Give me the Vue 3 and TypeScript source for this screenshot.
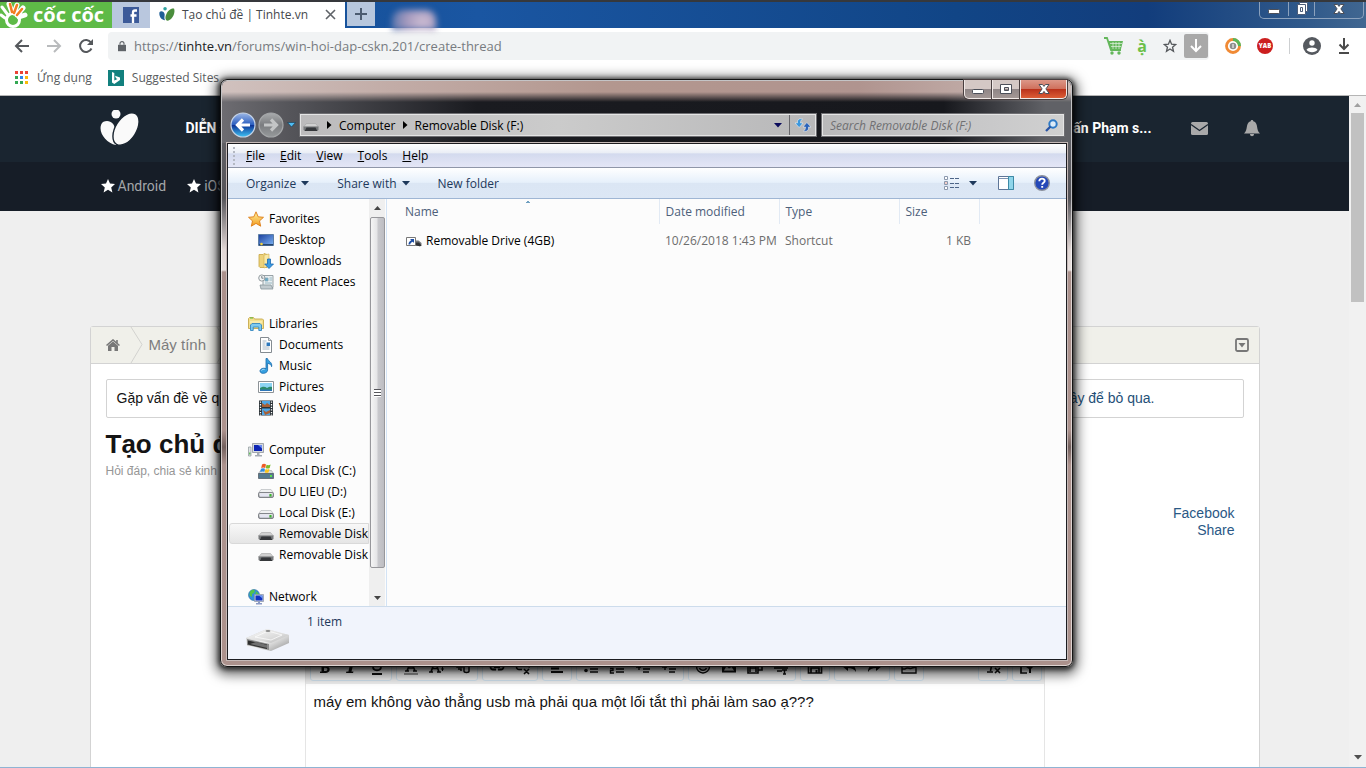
<script setup lang="ts">
import { ref } from 'vue'

interface TreeItem { label: string; icon: string; selected?: boolean }
interface TreeGroup extends TreeItem { children: TreeItem[] }

const groups: TreeGroup[] = [
  {
    label: 'Favorites', icon: 'star', children: [
      { label: 'Desktop', icon: 'desktop' },
      { label: 'Downloads', icon: 'downloads' },
      { label: 'Recent Places', icon: 'recent' },
    ],
  },
  {
    label: 'Libraries', icon: 'libraries', children: [
      { label: 'Documents', icon: 'document' },
      { label: 'Music', icon: 'music' },
      { label: 'Pictures', icon: 'picture' },
      { label: 'Videos', icon: 'video' },
    ],
  },
  {
    label: 'Computer', icon: 'computer', children: [
      { label: 'Local Disk (C:)', icon: 'osdisk' },
      { label: 'DU LIEU (D:)', icon: 'disk' },
      { label: 'Local Disk (E:)', icon: 'disk' },
      { label: 'Removable Disk (F:)', icon: 'usb', selected: true },
      { label: 'Removable Disk (G:)', icon: 'usb' },
    ],
  },
  { label: 'Network', icon: 'network', children: [] },
]

const menus = ['File', 'Edit', 'View', 'Tools', 'Help']

const editorGroups: string[][] = [
  ['bold', 'italic', 'underline'],
  ['color', 'size', 'para'],
  ['link', 'unlink'],
  ['align'],
  ['ul', 'ol', 'outdent', 'indent'],
  ['smile', 'image', 'media', 'insert'],
  ['save'],
  ['undo', 'redo'],
  ['gallery'],
]
const editorTools: string[][] = [['clear'], ['source']]

const url = ref('')
const search = ref('')
const message = ref('máy em không vào thẳng usb mà phải qua một lối tắt thì phải làm sao ạ???')
</script>

<template>
  <svg class="sprite" aria-hidden="true">
    <defs>
      <linearGradient id="g-gold" x1="0" y1="0" x2="0" y2="1"><stop offset="0" stop-color="#fff3a0" /><stop offset="1" stop-color="#f29a1c" /></linearGradient>
      <linearGradient id="g-blue" x1="0" y1="0" x2="1" y2="1"><stop offset="0" stop-color="#1b3f9c" /><stop offset="1" stop-color="#7db4f5" /></linearGradient>
      <linearGradient id="g-grey" x1="0" y1="0" x2="0" y2="1"><stop offset="0" stop-color="#f7f7f7" /><stop offset="1" stop-color="#9c9fa4" /></linearGradient>
      <linearGradient id="g-drive" x1="0" y1="0" x2="1" y2="1"><stop offset="0" stop-color="#b9b9b9" /><stop offset=".5" stop-color="#f4f4f4" /><stop offset="1" stop-color="#8c8c8c" /></linearGradient>
      <linearGradient id="g-lid" x1="0" y1="0" x2="1" y2="1"><stop offset="0" stop-color="#fbfbfb" /><stop offset=".6" stop-color="#dcdcdc" /><stop offset="1" stop-color="#b4b4b4" /></linearGradient>
      <linearGradient id="g-back" x1="0" y1="0" x2="0" y2="1"><stop offset="0" stop-color="#9db8e8" /><stop offset=".48" stop-color="#2c5fc0" /><stop offset=".5" stop-color="#0c2f93" /><stop offset="1" stop-color="#3fc4f5" /></linearGradient>
      <linearGradient id="g-fwd" x1="0" y1="0" x2="0" y2="1"><stop offset="0" stop-color="#a9abad" /><stop offset=".5" stop-color="#7b7d80" /><stop offset="1" stop-color="#96999b" /></linearGradient>
    </defs>
    <symbol id="i-star" viewBox="0 0 16 16"><path d="M8 .8l2.200 5 5.300.5-4 3.600 1.200 5.300L8 12.400l-4.700 2.800 1.200-5.300-4-3.600 5.300-.5z" fill="url(#g-gold)" stroke="#dd7d17" stroke-width=".9" /></symbol>
    <symbol id="i-desktop" viewBox="0 0 16 16"><path d="M.5 2.500h15v11H.5z" fill="url(#g-blue)" stroke="#5d7ea5" /><path d="M1 12h14v1.500H1z" fill="#27476f" /><circle cx="3.500" cy="12" r="1.300" fill="#f3d13d" /></symbol>
    <symbol id="i-downloads" viewBox="0 0 16 16"><path d="M1 1.500h4l1-1 3 1v13H2l-1-1z" fill="#edd27a" stroke="#c7a441" stroke-width=".8" /><path d="M6 2l5-1v12l-5 2z" fill="#fae9a5" stroke="#cfae52" stroke-width=".6" /><path d="M9.500 6h3v5h3L11 15.500 6.700 11h2.800z" fill="#3b9be3" stroke="#1b68b0" stroke-width=".8" /></symbol>
    <symbol id="i-recent" viewBox="0 0 16 16"><path d="M5 1.500h10v12H5z" fill="#e8eef1" stroke="#8d989d" stroke-width=".9" /><path d="M7 4h3v3H7zM11.500 4h2.500M11.500 6h2.500M7 9h7" fill="#64a9c8" stroke="#86a9b7" stroke-width=".8" /><path d="M2 11h11l2 4H3z" fill="#c2cbcf" stroke="#87949a" stroke-width=".8" /><circle cx="3.800" cy="4" r="3.100" fill="#f4f6f7" stroke="#929b9f" /><path d="M3.800 2v2.200H5.500" fill="none" stroke="#58646a" stroke-width=".8" /></symbol>
    <symbol id="i-libraries" viewBox="0 0 16 16"><path d="M.5 12.500v-10l1-1h4l1 1.500h8l1 1v8.500z" fill="#f3df8d" stroke="#c6a94c" stroke-width=".9" /><path d="M2 2h3" stroke="#5fbb46" /><path d="M2 6h12" stroke="#fff6c9" /><path d="M2.500 14.500V9l1.500-1.500h8L13.500 9v5.500h-2.700V11H5.200v3.500z" fill="#7ecaf0" stroke="#3788bf" stroke-width=".9" /></symbol>
    <symbol id="i-document" viewBox="0 0 16 16"><path d="M2.500.5h8l3 3v12h-11z" fill="#fff" stroke="#848b91" /><path d="M10.500.5v3h3" fill="#dce2e6" stroke="#848b91" stroke-width=".8" /><path d="M4.500 4h4M4.500 6h3M4.500 8h3M4.500 10h7M4.500 12h7" stroke="#8fa3b5" stroke-width=".8" /><path d="M8.500 5.500h3.500v3.500H8.500z" fill="#2d78bd" /></symbol>
    <symbol id="i-music" viewBox="0 0 16 16"><path d="M8 .5h1.400c.5 2.700 5.300 3.500 4.200 8.200-.4-2.300-2.100-3-4-3.400V12c0 4-7.600 4.500-7.600 1 0-2.300 3.500-3.500 6-2.300z" fill="#36a0e0" stroke="#1869ab" stroke-width=".8" /><path d="M3.500 12.500c.5-1 2-1.300 3-1" stroke="#b6e3fb" fill="none" /></symbol>
    <symbol id="i-picture" viewBox="0 0 16 16"><path d="M.5 2.500h15v11H.5z" fill="#fff" stroke="#8c9297" /><path d="M2 4h12v8H2z" fill="#8dd4f4" /><path d="M2 9c3-2 5-1.500 7 0 2-1 3-1.500 5-1v4H2z" fill="#2b8a6c" /><path d="M2 10.500h12V12H2z" fill="#2e76b8" /></symbol>
    <symbol id="i-video" viewBox="0 0 16 16"><path d="M1 .5h14v15H1z" fill="#2c3338" /><path d="M4 1h8v6H4zM4 8.500h8V15H4z" fill="#4ea6e6" /><path d="M4 3l3 2 2-2 3 2v2H4zM5 10l3 2 4-2v3l-5 2z" fill="#a75f35" /><path d="M2.500 1.500v14M13.500 1.500v14" stroke="#fff" stroke-width="1.300" stroke-dasharray="1.300 1.300" /></symbol>
    <symbol id="i-computer" viewBox="0 0 16 16"><path d="M.5 5h2.500v9H.5z" fill="#dfe5e6" stroke="#8d9799" stroke-width=".7" /><path d="M1.200 10.500h1.200v2H1.200z" fill="#48b53c" /><path d="M4.500 1.500h11v9h-11z" fill="#d5d9de" stroke="#8e949c" stroke-width=".8" /><path d="M6 3h8v6H6z" fill="#0d24b3" /><path d="M10 3h4v3.500z" fill="#6a8bf1" /><path d="M9 11h2.500v2H14v1.500H7V13h2z" fill="#a6acb3" /></symbol>
    <symbol id="i-osdisk" viewBox="0 0 16 16"><path d="M2.500 7.500h11l2 3H.5z" fill="#d8dde0" stroke="#9aa1a6" stroke-width=".6" /><path d="M.5 10.500h15v5H.5z" fill="#53798f" stroke="#556069" stroke-width=".8" /><path d="M12 12h2v2h-2z" fill="#5ee14c" /><path d="M4 1.500C5.500.5 7 .8 8 1.500L7.200 5C6 4.300 4.500 4.300 3.200 5z" fill="#ef5a25" /><path d="M8.600 1.700c1.300.7 2.700.5 4-.2L11.700 5c-1.300.7-2.700.7-4 0z" fill="#7dbb2b" /><path d="M3 5.700c1.300-.7 2.800-.7 4 0L6.200 9c-1.200-.7-2.600-.6-4 0z" fill="#2f8be0" /><path d="M7.600 5.900c1.300.7 2.700.6 3.900-.1l-.9 3.400c-1.200.7-2.600.7-3.900 0z" fill="#fbc31a" /></symbol>
    <symbol id="i-disk" viewBox="0 0 16 16"><path d="M3 5.500h10l2.500 3.500H.5z" fill="#f0f1f2" stroke="#b7babd" stroke-width=".7" /><rect x=".5" y="8.500" width="15" height="5" rx="1.500" fill="url(#g-grey)" stroke="#777b80" stroke-width=".9" /><path d="M2 9.500h9v3H2z" fill="#e4e5f2" /><path d="M11.500 10h2v2.500h-2z" fill="#39b92c" /></symbol>
    <symbol id="i-usb" viewBox="0 0 16 16"><path d="M3.500 6.500h9l3 3.500H.5z" fill="#d0d0d0" stroke="#a3a3a3" stroke-width=".6" /><path d="M.5 9.500h15v3.500l-1 .8-2-2.500h-9l-2 2.500-1-.8z" fill="#77797b" /><path d="M3.500 10.500h9l2 3.500H1.500z" fill="#35373a" /></symbol>
    <symbol id="i-network" viewBox="0 0 16 16"><circle cx="6" cy="6" r="5.500" fill="#2f8fdb" stroke="#2f6e9e" stroke-width=".6" /><path d="M2 2.500C4 .5 6 .5 7 1.500L6 4 4 5v3L1.500 6.500zM8 2l3 3-1 2H7z" fill="#54c34a" /><path d="M6.500 5.500h9v7h-9z" fill="#cfd6e2" stroke="#8791a5" stroke-width=".7" /><path d="M7.500 6.500h7v5h-7z" fill="#1233c0" /><path d="M11 6.500h3.500v3z" fill="#6f9bf3" /><path d="M10 12.500h2V14h2v1.500H8V14h2z" fill="#8b9ac4" /></symbol>
    <symbol id="i-shortcut" viewBox="0 0 16 16"><path d="M9 7.500h3.500L15.500 10v2.500l-1.500.7-5-.7z" fill="#77797b" /><path d="M9 9.500h4l2.500 3-1.500.7-5-1z" fill="#303235" /><path d="M.5 4.500h9v8h-9z" fill="#fff" stroke="#777" /><path d="M4 6h4v4L6.800 8.800C5.200 9.500 4.500 10 4.200 11.500H2.500c0-2 1-3.300 2.800-4.200z" fill="#1c4ea5" /></symbol>
    <symbol id="i-down" viewBox="0 0 8 5"><path d="M0 0h8L4 4.500z" fill="currentColor" /></symbol>
    <symbol id="i-right" viewBox="0 0 5 8"><path d="M0 0l4.500 4L0 8z" fill="currentColor" /></symbol>
    <symbol id="i-star5" viewBox="0 0 14 14"><path d="M7 0l2 4.600 5 .5-3.800 3.300 1.200 5L7 10.700 2.600 13.400l1.200-5L0 5.100l5-.5z" fill="currentColor" /></symbol>
    <symbol id="i-min" viewBox="0 0 16 16"><rect x="2.500" y="8.500" width="11" height="4" rx="1" fill="#fff" stroke="#4c4f59" /></symbol>
    <symbol id="i-max" viewBox="0 0 16 16"><path d="M2.500 3.500h11v9h-11zM6.500 6.500h4v3h-4z" fill="#fff" fill-rule="evenodd" stroke="#4c4f59" /></symbol>
    <symbol id="i-restore" viewBox="0 0 16 16"><path d="M5.500 1.500h8v9h-8z" fill="#fff" stroke="#4c5c78" /><path d="M3.500 3.500h8v10h-8zM6.500 6.500h2v4h-2z" fill="#fff" fill-rule="evenodd" stroke="#4c5c78" /></symbol>
    <symbol id="i-close" viewBox="0 0 16 16"><path d="M3 3.500h3.500L8 5.400l1.500-1.900H13L9.900 7.900l3.300 4.600H9.500L8 10.400l-1.500 2.100H2.800l3.300-4.600z" fill="#fff" stroke="#4c4f59" /></symbol>
    <symbol id="e-bold" viewBox="0 0 16 16"><path d="M3 2h5.500c4.500 0 4.500 5 1.500 5.500 4 .7 3.500 6.500-1.500 6.500H3v-1.500h1.500v-9H3zm4 2v2.700h1.500c2 0 2-2.700 0-2.700zm0 4.700V12h1.500c2.500 0 2.500-3.300 0-3.300z" fill="currentColor" /></symbol>
    <symbol id="e-italic" viewBox="0 0 16 16"><path d="M6 2h7l-.3 1.500h-2L8.500 12.500h2L10 14H3l.4-1.500h2L7.500 3.500h-2z" fill="currentColor" /></symbol>
    <symbol id="e-underline" viewBox="0 0 16 16"><path d="M4 1v6.500c0 5 8 5 8 0V1M3 15h10" fill="none" stroke="currentColor" stroke-width="1.800" /></symbol>
    <symbol id="e-color" viewBox="0 0 16 16"><path d="M4 12L8 2l4 10M5 9h6M2 12h4M10 12h4" fill="none" stroke="currentColor" stroke-width="1.700" /><path d="M1 15h14" stroke="#777" stroke-width="1.500" /></symbol>
    <symbol id="e-size" viewBox="0 0 16 16"><path d="M2 13L6 2l4 11M3.500 9.500h5M0 13h4M8 13h4" fill="none" stroke="currentColor" stroke-width="1.700" /><path d="M12 10h3M13.500 8v4" stroke="currentColor" /></symbol>
    <symbol id="e-para" viewBox="0 0 16 16"><path d="M2 5h5v3H2zM3 10h3v2M9 7v5c0 2 5 2 5 0V5" fill="none" stroke="currentColor" stroke-width="1.500" /></symbol>
    <symbol id="e-link" viewBox="0 0 16 16"><path d="M7 5.500H4a2.500 2.500 0 000 5h3M9 5.500h3a2.500 2.500 0 010 5H9M5 8h6" fill="none" stroke="currentColor" stroke-width="1.800" /></symbol>
    <symbol id="e-unlink" viewBox="0 0 16 16"><path d="M6 5.500H4a2.500 2.500 0 000 5h3M9 5.500h3a2.500 2.500 0 012 3M9 10l5 5m0-5l-5 5" fill="none" stroke="currentColor" stroke-width="1.600" /></symbol>
    <symbol id="e-align" viewBox="0 0 16 16"><path d="M2 3h12M2 6h7M2 9.500h8M2 13h12" stroke="currentColor" stroke-width="1.800" /></symbol>
    <symbol id="e-ul" viewBox="0 0 16 16"><path d="M7 4h8M7 10h8M7 13h8" stroke="currentColor" stroke-width="1.500" /><circle cx="3" cy="4" r="1.700" fill="currentColor" /><circle cx="3" cy="11.500" r="1.800" fill="currentColor" /></symbol>
    <symbol id="e-ol" viewBox="0 0 16 16"><path d="M7 4h8M7 10h8M7 13h8M1 9.500h3v2H1.500v2.500H5M3 2v4" fill="none" stroke="currentColor" stroke-width="1.400" /></symbol>
    <symbol id="e-outdent" viewBox="0 0 16 16"><path d="M1 3h14M8 6.500h7M8 10h7M8 13h6M6 8H1m3-3v6" fill="none" stroke="currentColor" stroke-width="1.400" /></symbol>
    <symbol id="e-smile" viewBox="0 0 16 16"><circle cx="8" cy="7.500" r="6.500" fill="none" stroke="currentColor" stroke-width="1.400" /><path d="M4.500 9c1 3 6 3 7 0M5.500 5v1.500M10.500 5v1.500" fill="none" stroke="currentColor" stroke-width="1.300" /></symbol>
    <symbol id="e-image" viewBox="0 0 16 16"><path d="M1 2.500h14v11H1zM3 11.500h10L10.500 8 8 9.500 5.500 7z" fill="currentColor" fill-rule="evenodd" /></symbol>
    <symbol id="e-media" viewBox="0 0 16 16"><path d="M1 4h10v10H1zM3 5v8M9 5v8M3 9h6M7 1.500h8V11h-4" fill="none" stroke="currentColor" stroke-width="1.600" /></symbol>
    <symbol id="e-insert" viewBox="0 0 16 16"><path d="M1 3h14M1 6h14M1 9h14M4 12h5M9 11h5M11.500 11v4M10 15h3" fill="none" stroke="currentColor" stroke-width="1.500" /></symbol>
    <symbol id="e-save" viewBox="0 0 16 16"><path d="M1.500 2h11l2 2v10h-13zM4 14V9h8v5M5 2v3h5V2" fill="none" stroke="currentColor" stroke-width="1.700" /><path d="M8.500 11h2v3h-2z" fill="currentColor" /></symbol>
    <symbol id="e-undo" viewBox="0 0 16 16"><path d="M1 7l6-5v3c5 0 8 3 8 8-2-3-4-4-8-4v3z" fill="currentColor" /></symbol>
    <symbol id="e-redo" viewBox="0 0 16 16"><path d="M15 7L9 2v3c-5 0-8 3-8 8 2-3 4-4 8-4v3z" fill="currentColor" /></symbol>
    <symbol id="e-gallery" viewBox="0 0 16 16"><path d="M1 2h14v12H1zM1 10h3c3-3 5 1 7-1l4-1" fill="none" stroke="currentColor" stroke-width="1.400" /></symbol>
    <symbol id="e-clear" viewBox="0 0 16 16"><path d="M3 2h9M7.500 2l-2 10M2 13h6M10 9l5 5m0-5l-5 5" fill="none" stroke="currentColor" stroke-width="1.600" /></symbol>
    <symbol id="e-source" viewBox="0 0 16 16"><path d="M6 3H2v11h6" fill="none" stroke="currentColor" stroke-width="1.700" /><path d="M7 3h7v5l-2 2v4h-2v-4L7 8z" fill="currentColor" /></symbol>
  </svg>

  <div class="screen">
    <header class="tabstrip">
      <div class="brand">
        <svg class="brand-mark" width="30" height="26" viewBox="0 0 30 26"><g fill="none" stroke="#fff" stroke-width="3"><circle cx="13" cy="18" r="6.500" /><path d="M2 5l6 8M1 13l4 3" stroke-linecap="round" /></g><path d="M9 2l3 8M17 3l-3 8M23 6l-6 7M25 13l-6 2" stroke="#fff" stroke-width="5" stroke-linecap="round" /><path d="M10 2l2 8M17 3l-3 8M22 7l-5 6" stroke="#f47b20" stroke-width="2.500" stroke-linecap="round" /></svg>
        <span>cốc cốc</span>
      </div>
      <button class="tab-pinned" aria-label="Facebook"><svg width="16" height="16" viewBox="0 0 16 16"><path d="M0 0h16v16H0z" fill="#3c5a99" /><path d="M14 3.500h-2c-1.500 0-2 .8-2 2V16M7.500 8.500h6" stroke="#fff" stroke-width="2.300" fill="none" /></svg></button>
      <div class="tab-active">
        <svg width="16" height="14" viewBox="0 0 40 36"><circle cx="15" cy="4.500" r="4.500" fill="#2fa3a0" /><path d="M1 13c4-4 12-1 13 6 0 6-2 10 1 15C5 34-2 22 1 13z" fill="#1f5f96" /><path d="M38 4c4 9-2 26-14 31-10 2-9-10-6-16C22 9 31 2 38 4z" fill="#4a8d3c" /></svg>
        <span>Tạo chủ đề | Tinhte.vn</span>
        <button class="tab-close" aria-label="Close tab"><svg width="11" height="11" viewBox="0 0 11 11"><path d="M1 1l9 9M10 1l-9 9" stroke="#5f6368" stroke-width="1.600" /></svg></button>
      </div>
      <button class="tab-new" aria-label="New tab"><svg width="12" height="12" viewBox="0 0 12 12"><path d="M6 0v12M0 6h12" stroke="#4b5b70" stroke-width="2" /></svg></button>
      <span class="desktop-blur"></span>
      <div class="browser-caption">
        <button aria-label="Minimize browser"><svg width="16" height="16"><use href="#i-min" /></svg></button>
        <button class="mid" aria-label="Restore browser"><svg width="16" height="16"><use href="#i-restore" /></svg></button>
        <button class="wide" aria-label="Close browser"><svg width="16" height="16"><use href="#i-close" /></svg></button>
      </div>
    </header>

    <div class="navbar">
      <button aria-label="Back"><svg width="16" height="16" viewBox="0 0 16 16"><path d="M15 8H2M8 2L2 8l6 6" fill="none" stroke="#55585c" stroke-width="2" /></svg></button>
      <button aria-label="Forward"><svg width="16" height="16" viewBox="0 0 16 16"><path d="M1 8h13M8 2l6 6-6 6" fill="none" stroke="#b9bbbd" stroke-width="2" /></svg></button>
      <button aria-label="Reload"><svg width="16" height="16" viewBox="0 0 16 16"><path d="M13.500 10.500A6 6 0 1113 4.500" fill="none" stroke="#55585c" stroke-width="2" /><path d="M15 1v6H9z" fill="#55585c" /></svg></button>
      <div class="omnibox">
        <svg width="8" height="12" viewBox="0 0 10 13"><path d="M0 5h10v8H0z" fill="#5f6368" /><path d="M2.500 5V3.500a2.500 2.500 0 015 0V5" fill="none" stroke="#5f6368" stroke-width="1.400" /></svg>
        <label class="url"><span class="dim">https://</span>tinhte.vn<span class="dim">/forums/win-hoi-dap-cskn.201/create-thread</span><input v-model="url" aria-label="Address" /></label>
        <button aria-label="Shopping"><svg width="20" height="18" viewBox="0 0 20 18"><path d="M0 1h3l4 12h10" fill="none" stroke="#64b75b" stroke-width="1.800" /><path d="M4 4h15l-2 8H7z" fill="#64b75b" /><path d="M6 6.500h12M7 9.500h10M9 5v7M12 5v7M15 5v7" stroke="#e4f2e3" stroke-width=".7" /><circle cx="8" cy="16" r="1.700" fill="#64b75b" /><circle cx="15" cy="16" r="1.700" fill="#64b75b" /></svg></button>
        <button class="accent" aria-label="Vietnamese input">ạ̀</button>
        <button aria-label="Bookmark"><svg width="14" height="14" viewBox="-1 -1 16 16"><path d="M7 .5l1.800 4.400 4.700.4-3.600 3.100 1.100 4.600-4-2.500L3 13l1.100-4.600L.5 5.300l4.700-.4z" fill="none" stroke="#55585c" stroke-width="1.500" /></svg></button>
        <button class="save-page" aria-label="Download page"><svg width="12" height="14" viewBox="0 0 12 14"><path d="M6 0v12M1 7l5 5 5-5" fill="none" stroke="#fff" stroke-width="2" /></svg></button>
      </div>
      <div class="extensions">
        <button aria-label="Coc Coc rewards"><svg width="16" height="16" viewBox="0 0 16 16"><circle cx="8" cy="8" r="6.500" fill="#fff" stroke="#f08a35" stroke-width="2.800" /><path d="M8 1.500A6.500 6.500 0 0114.500 8" fill="none" stroke="#58b65a" stroke-width="3" /><circle cx="8" cy="8" r="3.300" fill="#8e8e8e" /><path d="M8 6v4" stroke="#fff" stroke-width="1" /></svg></button>
        <button class="yab" aria-label="YAB">YAB</button>
        <i class="divider"></i>
        <button aria-label="Profile"><svg width="18" height="18" viewBox="0 0 18 18"><circle cx="9" cy="9" r="9" fill="#55595f" /><circle cx="9" cy="6" r="2.700" fill="#fff" /><path d="M3.500 12.800c2-3.200 9-3.200 11 0-2 3.200-9 3.200-11 0z" fill="#fff" /></svg></button>
        <button aria-label="Downloads"><svg width="12" height="16" viewBox="0 0 12 16"><path d="M6 0v11M1.500 6.500L6 11l4.500-4.500M1 15h10" fill="none" stroke="#4a4a4a" stroke-width="2" /></svg></button>
      </div>
    </div>

    <nav class="bookmarks">
      <a href="#apps"><svg width="14" height="14" viewBox="0 0 14 14"><path d="M0 0h3v3H0zM5 0h3v3H5zM10 0h3v3h-3z" fill="#ea4335" /><path d="M0 5h3v3H0z" fill="#34a853" /><path d="M5 5h3v3H5z" fill="#2f86eb" /><path d="M10 5h3v3h-3z" fill="#f9b90a" /><path d="M0 10h3v3H0z" fill="#34a853" /><path d="M5 10h3v3H5z" fill="#34a853" /><path d="M10 10h3v3h-3z" fill="#f9b90a" /></svg>Ứng dụng</a>
      <a href="#suggested"><svg width="16" height="16" viewBox="0 0 16 16"><path d="M0 0h16v16H0z" fill="#12807e" /><path d="M4 2l2.300 1v7.500L9.500 9 8 8.200 7 5.700l5 1.900V10l-5.700 4L4 12.500z" fill="#fff" /></svg>Suggested Sites</a>
    </nav>

    <div class="viewport">
      <main class="page">
        <div class="site-top">
          <div class="wrap">
            <a class="site-logo" href="#home" aria-label="Tinhte"><svg width="40" height="36" viewBox="0 0 40 36"><circle cx="16" cy="4" r="4.500" fill="#fafafa" /><path d="M3 12c6-3 12 1 12 8l1 15C5 33-4 19 3 12z" fill="#fafafa" /><ellipse cx="26" cy="19" rx="10.500" ry="18" transform="rotate(32 26 19)" fill="#fafafa" stroke="#1a2530" stroke-width="1.400" /></svg></a>
            <a class="site-link" href="#forum">DIỄN ĐÀN</a>
            <a class="user" href="#user">Tuấn Phạm s...</a>
            <button aria-label="Inbox"><svg width="17" height="13" viewBox="0 0 17 13"><rect width="17" height="13" rx="1.500" fill="#a9a9a9" /><path d="M0 2.500l8.500 6 8.500-6" fill="none" stroke="#1a2530" stroke-width="1.300" /></svg></button>
            <button aria-label="Alerts"><svg width="16" height="17" viewBox="0 0 16 17"><path d="M8 0c1 0 1.300.7 1.300 1.300C15 3 11.500 10 16 13.500H0C4.500 10 1 3 6.700 1.300 6.700.7 7 0 8 0zM6 14h4c0 3-4 3-4 0z" fill="#a9a9a9" /></svg></button>
          </div>
        </div>
        <div class="site-nav">
          <div class="wrap">
            <a href="#android"><svg width="14" height="14"><use href="#i-star5" /></svg>Android</a>
            <a href="#ios"><svg width="14" height="14"><use href="#i-star5" /></svg>iOS</a>
          </div>
        </div>
        <section class="panel">
          <div class="crumbs">
            <a href="#home" aria-label="Home"><svg width="14" height="12" viewBox="0 0 14 12"><path d="M7 2.500l5 4.200V12H8.500V8h-3v4H2V6.700z" fill="#777" /><path d="M.5 6.500L7 1l6.500 5.500M11 1v3" fill="none" stroke="#777" stroke-width="1.600" /></svg></a>
            <svg class="chev" width="13" height="36" viewBox="0 0 13 36"><path d="M1 0l11 17.500L1 36" fill="none" stroke="#d2d2cf" /></svg>
            <a href="#pc">Máy tính</a>
            <svg class="chev" width="13" height="36" viewBox="0 0 13 36"><path d="M1 0l11 17.500L1 36" fill="none" stroke="#d2d2cf" /></svg>
            <button class="crumb-menu" aria-label="Quick navigation"><svg width="14" height="14" viewBox="0 0 14 14"><rect x="1" y="1" width="12" height="12" rx="1.500" fill="none" stroke="#777" stroke-width="1.800" /><path d="M3.500 5h7L7 9.500z" fill="#777" /></svg></button>
          </div>
          <div class="notice"><span>Gặp vấn đề về quyền</span><a href="#skip">đây để bỏ qua.</a></div>
          <h1>Tạo chủ đề</h1>
          <p class="sub">Hỏi đáp, chia sẻ kinh nghiệm</p>
          <div class="share"><a href="#facebook">Facebook</a><a href="#share">Share</a></div>
          <div class="editor">
            <div class="editor-bar">
              <div v-for="(g, i) in editorGroups" :key="i" class="tool-group">
                <button v-for="t in g" :key="t" :aria-label="t"><svg width="16" height="16"><use :href="'#e-' + (t === 'indent' ? 'outdent' : t)" /></svg></button>
              </div>
              <i class="spring"></i>
              <div v-for="(g, i) in editorTools" :key="'r' + i" class="tool-group">
                <button v-for="t in g" :key="t" :aria-label="t"><svg width="16" height="16"><use :href="'#e-' + t" /></svg></button>
              </div>
            </div>
            <textarea v-model="message" aria-label="Message" spellcheck="false"></textarea>
          </div>
        </section>
      </main>
      <div class="page-scroll">
        <svg width="7" height="4" viewBox="0 0 7 4"><path d="M0 4l3.500-4L7 4z" fill="#a0a0a0" /></svg>
        <span></span>
        <svg class="arrow-down" width="8" height="5"><use href="#i-down" /></svg>
      </div>
    </div>

    <section class="window">
      <div class="caption">
        <button aria-label="Minimize"><svg width="16" height="16"><use href="#i-min" /></svg></button>
        <button aria-label="Maximize"><svg width="16" height="16"><use href="#i-max" /></svg></button>
        <button class="close" aria-label="Close"><svg width="16" height="16"><use href="#i-close" /></svg></button>
      </div>
      <div class="location">
        <div class="travel">
          <button aria-label="Back"><svg width="26" height="26" viewBox="0 0 26 26"><circle cx="13" cy="13" r="12" fill="url(#g-back)" stroke="#c5d3e6" stroke-width="1.200" /><path d="M20 13H9M13 7.500L7.500 13l5.500 5.500" fill="none" stroke="#fff" stroke-width="3.200" /></svg></button>
          <button aria-label="Forward"><svg width="26" height="26" viewBox="0 0 26 26"><circle cx="13" cy="13" r="12" fill="url(#g-fwd)" stroke="#a5a7a9" stroke-width="1.200" /><path d="M6 13h11M13 7.500l5.500 5.500-5.500 5.500" fill="none" stroke="#c3c5c6" stroke-width="3.200" /></svg></button>
          <button class="recent" aria-label="Recent pages"><svg width="9" height="6" viewBox="0 0 9 6"><path d="M.5.5h8l-4 4.500z" fill="#4fbcf2" stroke="#14364f" stroke-width=".6" /></svg></button>
        </div>
        <div class="address">
          <svg width="16" height="16"><use href="#i-usb" /></svg>
          <svg width="5" height="8"><use href="#i-right" /></svg>
          <button>Computer</button>
          <svg width="5" height="8"><use href="#i-right" /></svg>
          <button>Removable Disk (F:)</button>
          <button class="history" aria-label="Previous locations"><svg width="8" height="5"><use href="#i-down" /></svg></button>
          <button class="refresh" aria-label="Refresh"><svg width="16" height="14" viewBox="0 0 16 14"><path d="M7.500 1C4 0 2 2 2.500 5H0l4.200 4.500L8 5H5.500c0-2 .5-3 2-4z" fill="#3c97dc" stroke="#f4f8fc" stroke-width=".5" /><path d="M8.500 13c3.500 1 5.500-1 5-4H16l-4.200-4.500L8 9h2.500c0 2-.5 3-2 4z" fill="#2d63b8" stroke="#f4f8fc" stroke-width=".5" /></svg></button>
        </div>
        <label class="search">
          <input v-model="search" placeholder="Search Removable Disk (F:)" aria-label="Search Removable Disk (F:)" />
          <svg width="13" height="13" viewBox="0 0 13 13"><circle cx="8" cy="5" r="3.700" fill="#dcebf8" stroke="#2d79c6" stroke-width="2" /><path d="M5.500 7.500L1 12" stroke="#2a55a5" stroke-width="2.300" /></svg>
        </label>
      </div>

      <div class="client">
        <div class="menubar">
          <i class="grip"></i>
          <button v-for="m in menus" :key="m"><u>{{ m[0] }}</u>{{ m.slice(1) }}</button>
        </div>
        <div class="commands">
          <button class="organize">Organize<svg width="8" height="5"><use href="#i-down" /></svg></button>
          <button class="sharewith">Share with<svg width="8" height="5"><use href="#i-down" /></svg></button>
          <button>New folder</button>
          <i class="spring"></i>
          <button aria-label="Change view"><svg width="16" height="14" viewBox="0 0 16 14"><path d="M.5.5h3v3h-3zM.5 5.500h3v3h-3zM.5 10.500h3v3h-3z" fill="#fff" stroke="#8b98ad" /><path d="M1.500 7h1" stroke="#c43b2a" /><path d="M6 2.500h4M11 2.500h4M6 7.500h4M11 7.500h4M6 11.500h4M11 11.500h4" stroke="#4d6588" /></svg></button>
          <button class="viewdrop" aria-label="More view options"><svg width="8" height="5"><use href="#i-down" /></svg></button>
          <button class="preview" aria-label="Preview pane"><svg width="16" height="14" viewBox="0 0 16 14"><path d="M.5.5h15v13H.5z" fill="#fff" stroke="#5e7698" /><path d="M1 2.500h9" stroke="#7b91b1" /><path d="M10.500.5h5v13h-5z" fill="#8fd5ea" stroke="#3d8aa6" /></svg></button>
          <button aria-label="Help"><svg width="16" height="16" viewBox="0 0 16 16"><circle cx="8" cy="8" r="7.300" fill="#2448b8" stroke="#8b909c" stroke-width="1.400" /><path d="M5.300 6.200c0-3.500 5.500-3.200 5.400-.2 0 1.900-2.500 1.800-2.500 3.700M8.200 11v1.700" fill="none" stroke="#fff" stroke-width="1.900" /></svg></button>
        </div>
        <div class="body">
          <nav class="tree">
            <ul v-for="g in groups" :key="g.label">
              <li class="root"><svg width="16" height="16"><use :href="'#i-' + g.icon" /></svg>{{ g.label }}</li>
              <li v-for="c in g.children" :key="c.label" :class="{ selected: c.selected }"><svg width="16" height="16"><use :href="'#i-' + c.icon" /></svg>{{ c.label }}</li>
            </ul>
          </nav>
          <div class="tree-scroll">
            <svg width="7" height="4" viewBox="0 0 7 4"><path d="M0 4l3.500-4L7 4z" fill="#444" /></svg>
            <span><i></i></span>
            <svg width="7" height="4" viewBox="0 0 7 4"><path d="M0 0h7L3.500 4z" fill="#444" /></svg>
          </div>
          <div class="files">
            <table>
              <colgroup><col class="c-name" /><col class="c-col" /><col class="c-col" /><col class="c-size" /></colgroup>
              <thead><tr><th class="sorted">Name</th><th>Date modified</th><th>Type</th><th>Size</th></tr></thead>
              <tbody><tr><td class="name"><svg width="16" height="16"><use href="#i-shortcut" /></svg>Removable Drive (4GB)</td><td>10/26/2018 1:43 PM</td><td>Shortcut</td><td class="num">1 KB</td></tr></tbody>
            </table>
          </div>
        </div>
        <footer class="details">
          <svg width="46" height="28" viewBox="0 0 46 28"><path d="M1 13L22 4l22 6v8L26 26 2 21z" fill="url(#g-drive)" /><path d="M1 13L22 4l22 6-18 8z" fill="url(#g-lid)" /><path d="M10 12l13-6 14 4-11 5z" fill="none" stroke="#fff" stroke-width=".7" /><path d="M2 14l22 5v6L2 20z" fill="#8c8c8c" /><path d="M3 15.500l19 4V24L3 19.500z" fill="#2e2e2e" /><path d="M5 19l6-2 11 3v3z" fill="#707070" /><ellipse cx="23" cy="6" rx="2.500" ry="1" fill="#8a8a8a" /></svg>
          <span>1 item</span>
        </footer>
      </div>
    </section>
  </div>
</template>

<style>
html, body { margin: 0; }
</style>

<style scoped>
* { box-sizing: border-box; }
button { display: flex; align-items: center; justify-content: center; padding: 0; border: 0; background: none; font: inherit; color: inherit; white-space: nowrap; }
a { text-decoration: none; color: inherit; }
svg { display: block; flex: none; }
.sprite { position: absolute; width: 0; height: 0; }
.screen { position: relative; display: flex; flex-direction: column; height: 100vh; overflow: hidden; background: #fff; font-family: "Open Sans", "Noto Sans", sans-serif; font-size: 12px; white-space: nowrap; }

.tabstrip { display: flex; flex: none; height: 28px; border-top: 2px solid #36383c; background: linear-gradient(90deg, #0f498c, #1a56a2 35%, #114586 70%, #123d7c 84%, #315a8b 96%, #416791); }
.brand { display: flex; align-items: center; gap: 3px; width: 112px; overflow: hidden; background: #5eba47; color: #fff; font: bold 20px/26px "Open Sans", sans-serif; }
.tab-pinned { width: 38px; background: #b9c7de; }
.tab-active { display: flex; align-items: center; width: 195px; padding: 0 9px 2px; gap: 7px; background: #fff; color: #45484c; }
.tab-close { margin-left: auto; }
.tab-new { width: 28px; height: 24px; margin-left: 2px; background: #b7c7dd; }
.desktop-blur { width: 44px; height: 20px; margin: 8px 0 0 17px; border-radius: 10px 10px 0 0; background: radial-gradient(circle at 70% 60%, #cdbdd3, #a499bd 50%, #5373ac); filter: blur(3px); }
.browser-caption { display: flex; height: 17px; margin: 0 2px 0 auto; padding-bottom: 2px; border: 1px solid #8ba1bd; border-top: 0; border-radius: 0 0 5px 5px; }
.browser-caption button { width: 29px; border-right: 1px solid #8ba1bd; }
.browser-caption .mid { width: 26px; }
.browser-caption .wide { width: 48px; border: 0; }

.navbar { display: flex; flex: none; align-items: center; height: 36px; padding: 0 6px; }
.navbar > button { width: 32px; height: 32px; }
.omnibox { display: flex; flex: 1; align-items: center; height: 28px; margin-left: 6px; padding: 0 1px 0 10px; border-radius: 4px; background: #f1f3f4; }
.url { display: flex; flex: 1; margin-left: 8px; color: #202124; font-size: 13px; }
.url input { flex: 1; min-width: 0; padding: 0; border: 0; outline: 0; background: none; font: inherit; }
.dim { color: #777b80; }
.omnibox button { width: 28px; height: 24px; }
.omnibox .accent { color: #6cc04a; font-size: 16px; font-weight: bold; }
.omnibox .save-page { width: 24px; background: #a9a9a9; border-radius: 2px; }
.extensions { display: flex; align-items: center; margin-left: 8px; }
.extensions button { width: 32px; height: 28px; }
.extensions .yab { width: 16px; height: 16px; margin: 0 8px; border-radius: 8px; background: #cc1f1f; color: #fff; font-size: 6px; font-weight: 800; }
.divider { width: 1px; height: 16px; margin: 0 6px 0 8px; background: #cdcfd1; }
.bookmarks { display: flex; flex: none; gap: 16px; align-items: center; height: 32px; padding: 0 15px 4px; border-bottom: 1px solid #b5b5b5; color: #5a5d61; }
.bookmarks a { display: flex; align-items: center; gap: 8px; }

.viewport { display: flex; flex: 1; min-height: 0; border-bottom: 1px solid #8fb4d3; }
.page { flex: 1; min-width: 0; overflow: hidden; background: #efefef; font-family: "Liberation Sans", Arial, sans-serif; }
.wrap { display: flex; align-items: center; max-width: 1170px; height: 100%; margin: 0 auto; padding: 0 11px; }
.site-top { height: 66px; background: #1a2530; color: #fff; font: bold 14px Roboto, sans-serif; }
.site-top .wrap { padding: 0 0 2px 10px; }
.site-link { margin-left: 46px; }
.user { margin-left: auto; }
.site-top button { width: 52px; }
.site-top .user + button { margin-left: 22px; }
.site-top button:last-child { margin-right: -18px; }
.site-nav { height: 49px; background: #161d27; color: #a3a6a9; font: 14px Roboto, sans-serif; }
.site-nav .wrap { gap: 21px; padding-bottom: 2px; }
.site-nav a { display: flex; align-items: center; gap: 3px; }
.site-nav svg { color: #fff; }
.panel { max-width: 1170px; min-height: 460px; margin: 115px auto 0; border: 1px solid #d3d3d3; border-radius: 3px 3px 0 0; background: #fff; }
.crumbs { display: flex; align-items: center; height: 37px; padding: 0 10px 0 15px; border-bottom: 1px solid #d3d3d3; background: #f0f0ea; color: #7d7d7d; font-size: 15px; line-height: 16px; }
.crumbs a { padding-bottom: 1px; }
.chev { margin: 0 6px 0 10px; }
.crumb-menu { margin-left: auto; }
.notice { display: flex; justify-content: space-between; align-items: center; height: 39px; margin: 15px 15px 0; padding: 0 88px 2px 10px; border: 1px solid #d3d3d3; border-radius: 2px; color: #141414; font-size: 14px; }
.notice a { color: #1f5078; }
h1 { margin: 10px 15px 0; color: #141414; font-size: 26px; line-height: 32px; }
.sub { margin: 3px 15px 0; color: #969696; font-size: 12px; line-height: 16px; }
.share { display: flex; flex-direction: column; align-items: flex-end; margin: 26px 24px 0; color: #2a5885; font-size: 14px; line-height: 17px; }
.editor { max-width: 740px; height: 240px; margin: 109px auto 0; border: 1px solid #e5e5e5; }
.editor-bar { display: flex; gap: 4px; height: 35px; padding: 3px 2px 3px 4px; background: #ececec; color: #111; }
.tool-group { display: flex; padding: 0 1px; border: 1px solid #cfe0ec; border-radius: 3px; background: #f0f0f0; }
.tool-group button { width: 26px; }
.spring { flex: 1; }
textarea { display: block; width: 100%; height: 200px; padding: 9px 8px; border: 0; outline: 0; resize: none; color: #141414; font: 15px/18px "Liberation Sans", Arial, sans-serif; }
.page-scroll { display: flex; flex: none; flex-direction: column; align-items: center; width: 17px; padding: 7px 0; background: #f1f1f1; color: #505050; }
.page-scroll span { width: 13px; height: 189px; margin-top: 6px; background: #c1c1c1; }
.arrow-down { margin-top: auto; }

.window { position: absolute; inset: 79px 293px 101px 220px; z-index: 1; display: flex; flex-direction: column; padding: 0 5px 5px; border: 1px solid #141414; border-radius: 7px; background: linear-gradient(180deg, #6d6c71, #555459 118px, #e2d8d6 170px, #e8e0de 190px, #ab918c 192px, #ad938e 350px, #73615e 367px, #ad938e 385px, #ab918c); box-shadow: inset 0 0 0 1px #ffffff99, 0 3px 12px 5px #0000008c, 0 1px 4px 2px #00000099; }
.window::before, .window::after { content: ""; position: absolute; z-index: -1; inset: 1px 1px auto; border-radius: 5px 5px 0 0; }
.window::before { height: 62px; background: linear-gradient(90deg, #6d6c71, #55555a 8%, #1a1b20 30%, #17181d 85%, #606166 97%); }
.window::after { height: 24px; background: linear-gradient(90deg, #d0c1be, #c2aca7 20%, #b3978f 45%, #b0948f 75%, #cdbdb9); mask-image: linear-gradient(180deg, #000 11px, transparent 21px); }
.caption { display: flex; flex: none; justify-content: flex-end; align-items: flex-start; height: 32px; }
.caption button { width: 28px; height: 19px; border: 1px solid #f1e9e7; border-top: 0; background: linear-gradient(180deg, #d4c8c5 50%, #8f8586 50%, #a39795); box-shadow: 0 0 0 1px #493f40; }
.caption button:first-child { border-radius: 0 0 0 5px; }
.caption .close { width: 47px; border-radius: 0 0 5px; background: linear-gradient(180deg, #dc9788, #cf6f5c 50%, #b8301a 50%, #dc5d36); }
.location { display: flex; flex: none; align-items: center; height: 26px; margin: 0 3px 5px 4px; }
.travel { display: flex; gap: 2px; width: 68px; margin-right: 2px; border-radius: 13px; }
.travel .recent { margin-left: 1px; }
.address, .search { display: flex; align-items: center; height: 22px; border: 1px solid #e4e4e4; outline: 1px solid #6e6e72; background: linear-gradient(90deg, #bcbbbc, #cbcbcb 50%, #b8b8b9); }
.address { flex: 1; gap: 7px; padding-left: 2px; }
.address > svg:first-child { margin-right: 1px; }
.history { margin-left: auto; color: #0b0b5c; }
.refresh { width: 26px; height: 20px; border-left: 1px solid #66666b; }
.search { width: 242px; margin-left: 6px; padding: 0 5px 0 7px; background: linear-gradient(90deg, #b9b9ba, #c9c9ca 70%, #d0d0d0); }
.search input { flex: 1; min-width: 0; padding: 0; border: 0; outline: 0; background: none; font: italic 12px "Open Sans", sans-serif; }
.search input::placeholder { color: #707073; opacity: 1; }
.client { display: flex; flex: 1; flex-direction: column; min-height: 0; border: 1px solid #1c1c20; outline: 1px solid #c6bab8; margin: 0 0 1px 1px; background: #fcfcfc; overflow: hidden; }
.menubar { display: flex; flex: none; align-items: center; gap: 15px; height: 24px; padding-left: 5px; border-bottom: 1px solid #8f96a8; background: linear-gradient(180deg, #fff, #e9edf5 40%, #d3daee 42%, #e4e6f6); }
.grip { width: 2px; height: 18px; margin-right: -4px; background: repeating-linear-gradient(180deg, #b4b8c2 0 2px, transparent 2px 4px); }
.commands { display: flex; flex: none; align-items: center; height: 31px; padding: 0 16px 0 18px; border-bottom: 1px solid #9fb6d4; background: linear-gradient(180deg, #fff, #e6f0fb 48%, #dbe6f4 50%, #dce7f5); color: #1e395b; }
.commands button { gap: 5px; }
.organize, .sharewith { margin-right: 28px; }
.commands .viewdrop { margin: 0 21px 0 9px; }
.commands .preview { margin-right: 20px; }
.body { display: flex; flex: 1; min-height: 0; }
.tree { flex: none; width: 141px; padding-top: 9px; overflow: hidden; color: #000; }
ul { margin: 0 0 21px; padding: 0; list-style: none; }
li { display: flex; align-items: center; gap: 5px; height: 21px; margin-left: 1px; padding-left: 28px; border: 1px solid transparent; }
.root { padding-left: 18px; }
.selected { border-color: #d9d9d9; border-radius: 3px 0 0 3px; background: linear-gradient(180deg, #f8f8f8, #e5e5e5); }
.tree-scroll { display: flex; flex: none; flex-direction: column; align-items: center; width: 16px; padding: 7px 0 6px; background: #efefef; }
.tree-scroll span { display: flex; flex: 1; align-items: center; justify-content: center; width: 15px; margin: 7px 0 28px; border: 1px solid #97979b; border-radius: 2px; background: linear-gradient(90deg, #f5f5f5, #e4e4e6 48%, #c9c9cd 52%, #bdbdc2); }
.tree-scroll i { width: 7px; height: 8px; background: repeating-linear-gradient(180deg, #55555a 0 1px, #fff 1px 3px); }
.files { flex: 1; margin-left: 1px; border-left: 1px solid #d3e3f5; }
table { width: 592px; table-layout: fixed; border-collapse: collapse; }
.c-name { width: 272px; }
.c-col { width: 120px; }
.c-size { width: 80px; }
th { height: 25px; padding: 0 0 0 6px; border-right: 1px solid #e2eaf4; color: #4c607a; font-weight: normal; text-align: left; }
th:first-child { padding-left: 18px; }
.sorted { background: linear-gradient(135deg, transparent 50%, #6f9fc0 50%) 138px 1px / 3px 3px no-repeat, linear-gradient(225deg, transparent 50%, #6f9fc0 50%) 141px 1px / 3px 3px no-repeat; }
td { height: 33px; padding: 0 0 0 6px; color: #6d6d6d; }
.name { display: flex; align-items: center; gap: 4px; padding-left: 19px; color: #000; }
.num { padding-right: 8px; text-align: right; }
.details { display: flex; flex: none; gap: 16px; height: 53px; padding: 6px 17px; border-top: 1px solid #cddcec; background: #f1f4fc; color: #1e395b; }
.details svg { margin-top: 12px; }
</style>
